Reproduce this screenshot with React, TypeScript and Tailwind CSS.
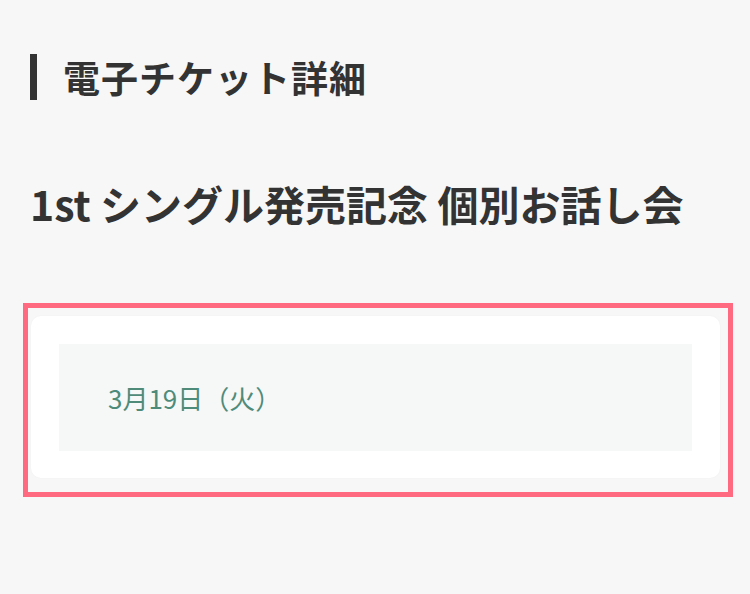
import React from 'react';

// 電子チケット詳細ページ
const App: React.FC = () => {
  return (
    <div className="min-h-[594px] w-[750px] bg-[#f7f7f7] font-['Noto_Sans_CJK_JP','Noto_Sans',sans-serif] text-[#333333]">
      <div className="px-[30px] pt-[54px]">
        <h2 className="flex h-[46px] items-center border-l-[7px] border-[#333333] pl-[26px] text-[37px] font-semibold leading-[46px] tracking-[1px]">
          電子チケット詳細
        </h2>
        <h1 className="mt-[83px] text-[41px] font-bold leading-[40px]">
          1st シングル発売記念 個別お話し会
        </h1>
      </div>

      <div className="ml-[23px] mr-[17px] mt-[80px] h-[194px] border-[5px] border-[#ff6a80] pb-[13px] pl-[3px] pr-[8px] pt-[8px]">
        <div className="h-[162px] rounded-[10px] bg-white p-[28px] shadow-[0_0_2px_rgba(0,0,0,0.04)]">
          <div className="flex h-[107px] items-center bg-[#f6f7f7] pl-[49px]">
            <span className="text-[26px] leading-none text-[#4f8b79]">3月19日（火）</span>
          </div>
        </div>
      </div>
    </div>
  );
};

export default App;
